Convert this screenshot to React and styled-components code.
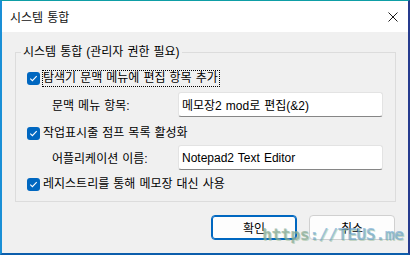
import React from "react";
import styled, { createGlobalStyle } from "styled-components";

const GlobalStyle = createGlobalStyle`
  html, body {
    margin: 0;
    padding: 0;
    background: #f0f0f0;
  }
  * {
    box-sizing: border-box;
  }
`;

const FONT = `"Liberation Sans", "Noto Sans CJK KR", sans-serif`;

const Window = styled.div`
  position: relative;
  width: 410px;
  height: 255px;
  display: flex;
  flex-direction: column;
  border-top: 1px solid #0e9ea6;
  border-left: 2px solid #1a8fd6;
  border-right: 2px solid #263b8e;
  border-bottom: 2px solid #0c5eac;
  background: #f0f0f0;
  font-family: ${FONT};
  font-size: 12px;
  word-spacing: 0.7px;
  color: #000;
  overflow: hidden;
`;

const TitleBar = styled.div`
  height: 31px;
  flex: none;
  background: #fff;
  display: flex;
  align-items: center;
  justify-content: space-between;
  padding: 0 10px 0 8px;
  .title {
    font-size: 12px;
    color: #111;
  }
`;

const CloseBtn = styled.div`
  width: 10px;
  height: 10px;
  display: flex;
  svg {
    display: block;
  }
`;

const Body = styled.div`
  flex: 1;
  display: flex;
  flex-direction: column;
  padding: 12px 12px 0 13px;
`;

const Group = styled.fieldset`
  margin: 0;
  padding: 0 0 8px 0;
  border: 1px solid #dcdcdc;
  min-width: 0;
  display: flex;
  flex-direction: column;
  legend {
    margin-left: 5px;
    padding: 0 2px;
    line-height: 16px;
    font-size: 12px;
  }
`;

const CheckRow = styled.div`
  height: 17px;
  margin-top: ${(p) => p.$mt}px;
  padding-left: 11px;
  display: flex;
  align-items: center;
  gap: 2px;
`;

const Box = styled.span`
  width: 13px;
  height: 13px;
  flex: none;
  border-radius: 3px;
  background: #0067c0;
  display: flex;
  align-items: center;
  justify-content: center;
`;

const CheckLabel = styled.span`
  height: 17px;
  display: flex;
  align-items: center;
  padding: 0 1px 0 0;
  border: 1px ${(p) => (p.$focus ? "dotted #000" : "solid transparent")};
  line-height: 15px;
`;

const FieldRow = styled.div`
  height: 25px;
  margin-top: ${(p) => p.$mt}px;
  padding-left: 36px;
  display: flex;
  align-items: center;
  label {
    width: 126px;
    flex: none;
  }
`;

const TextBox = styled.input`
  width: 205px;
  height: 25px;
  border: 1px solid #e3e3e3;
  border-bottom-color: #868686;
  border-radius: 3px;
  background: #fff;
  padding: 0 3px;
  font-family: ${FONT};
  font-size: 12px;
  word-spacing: 0.7px;
  color: #000;
  outline: none;
`;

const Buttons = styled.div`
  display: flex;
  justify-content: flex-end;
  gap: 12px;
  margin-top: 13px;
  padding-right: 1px;
`;

const Button = styled.button`
  width: 86px;
  height: 25px;
  border-radius: 4px;
  font-family: ${FONT};
  font-size: 12px;
  color: #000;
  background: #fdfdfd;
  border: 1px solid ${(p) => (p.$primary ? "#0067c0" : "#d0d0d0")};
  box-shadow: ${(p) => (p.$primary ? "inset 0 0 0 1px #0067c0" : "none")};
  padding: 0;
`;

const Watermark = styled.div`
  position: absolute;
  left: 260px;
  top: 224px;
  font-family: "DejaVu Sans Mono", monospace;
  font-weight: bold;
  font-size: 16.5px;
  letter-spacing: -0.5px;
  word-spacing: 0;
  color: rgba(100, 160, 205, 0.62);
  text-shadow: 1px 1px 0 rgba(150, 185, 150, 0.5);
  pointer-events: none;
  span {
    color: rgba(135, 170, 150, 0.7);
  }
`;

const Check = () => (
  <Box>
    <svg width="9" height="9" viewBox="0 0 9 9">
      <path d="M1.3 4.7 L3.4 6.7 L7.7 2.2" fill="none" stroke="#fff" strokeWidth="1.1" />
    </svg>
  </Box>
);

export default function App() {
  return (
    <>
      <GlobalStyle />
      <Window>
        <TitleBar>
          <span className="title">시스템 통합</span>
          <CloseBtn>
            <svg width="10" height="10" viewBox="0 0 10 10">
              <path d="M0.5 0.5 L9.5 9.5 M9.5 0.5 L0.5 9.5" stroke="#1a1a1a" strokeWidth="1" />
            </svg>
          </CloseBtn>
        </TitleBar>
        <Body>
          <Group>
            <legend>시스템 통합 (관리자 권한 필요)</legend>
            <CheckRow $mt={10}>
              <Check />
              <CheckLabel $focus>탐색기 문맥 메뉴에 편집 항목 추가</CheckLabel>
            </CheckRow>
            <FieldRow $mt={5}>
              <label>문맥 메뉴 항목:</label>
              <TextBox readOnly value="메모장2 mod로 편집(&2)" />
            </FieldRow>
            <CheckRow $mt={8}>
              <Check />
              <CheckLabel>작업표시줄 점프 목록 활성화</CheckLabel>
            </CheckRow>
            <FieldRow $mt={3}>
              <label>어플리케이션 이름:</label>
              <TextBox readOnly value="Notepad2 Text Editor" />
            </FieldRow>
            <CheckRow $mt={6}>
              <Check />
              <CheckLabel>레지스트리를 통해 메모장 대신 사용</CheckLabel>
            </CheckRow>
          </Group>
          <Buttons>
            <Button $primary>확인</Button>
            <Button>취소</Button>
          </Buttons>
        </Body>
        <Watermark>
          <span>https</span>://TEUS.me
        </Watermark>
      </Window>
    </>
  );
}
